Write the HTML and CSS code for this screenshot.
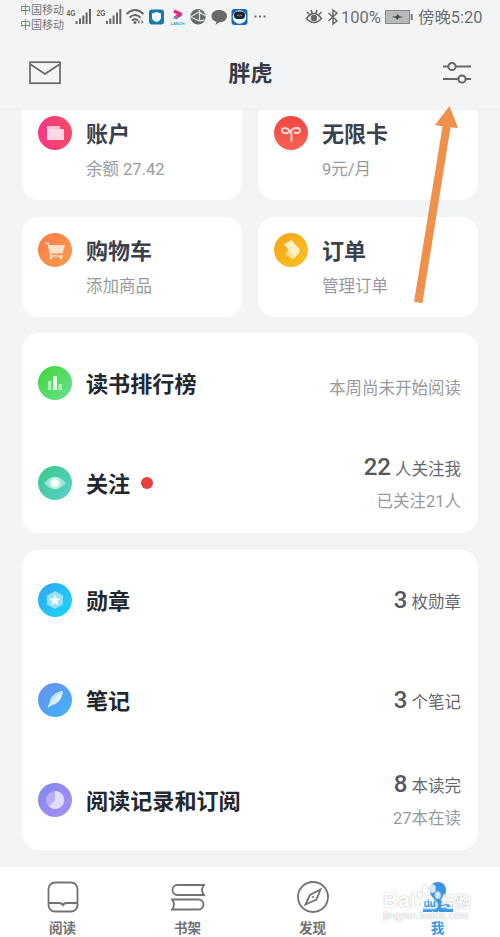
FILE: index.html
```
<!DOCTYPE html>
<html lang="zh-CN">
<head>
    <meta charset="UTF-8">
    <meta name="viewport" content="width=device-width, initial-scale=1.0">
    <title>我</title>
    <link rel="stylesheet" href="styles.css">
</head>
<body>
    <div class="app">
        <div class="status-bar">
            <div class="carriers">
                <span>中国移动</span>
                <span>中国移动</span>
            </div>
            <svg class="status-icons" width="206" height="34" viewBox="64 0 206 34">
                <text x="66.500" y="16" class="net" textLength="9" lengthAdjust="spacingAndGlyphs">4G</text>
                <path d="M76.5 21v3M80 18.500v5.500M83.300 15.500v8.500M86.600 12.500v11.500M90 9v15" stroke="#666769" stroke-width="2"/>
                <text x="96.500" y="16" class="net" textLength="9" lengthAdjust="spacingAndGlyphs">2G</text>
                <path d="M107 21v3M110.300 18.500v5.500M113.600 15.500v8.500M117 12.500v11.500M120.300 9v15" stroke="#666769" stroke-width="2"/>
                <g fill="none" stroke="#666769" stroke-width="1.800">
                    <path d="M126.500 14q8.500-8 17 0M129.500 17.500q5.500-5 11 0M132 20.500q3-2.500 6 0"/>
                </g>
                <circle cx="135" cy="22.500" r="1.500" fill="#666769"/>
                <path d="M137.500 22l2-2v4zM143.500 22l-2-2v4z" fill="#666769"/>
                <rect x="149" y="9.500" width="15" height="15" rx="3" fill="#1978a9"/>
                <path d="M156.500 12l4.500 1.500v4q0 3-4.500 4.500-4.500-1.500-4.500-4.500v-4z" fill="#eefaff"/>
                <path d="M155 15l3 2.500-3 2" fill="#d6f1f9"/>
                <path d="M174 11l6.500 3.200-5.500 3.800" fill="none" stroke="#df2c88" stroke-width="3.600" stroke-linejoin="round"/>
                <path d="M173.500 18.500l4-2" stroke="#49a5c8" stroke-width="1.600"/>
                <text x="170.500" y="24.500" class="app-name">LANCH</text>
                <circle cx="198" cy="16.800" r="7.700" fill="#68696b"/>
                <path d="M190.500 17l9-5.500M199.500 10v11M190.500 17l9 4M199.500 12l6 4M199.500 21l5-1" fill="none" stroke="#dfe0e2" stroke-width="1.300"/>
                <path d="M219 10c-4.500 0-7.500 2.600-7.500 6s2.500 5.200 5 5.800l-1 3 4-2.600c4.500 0 7.500-2.600 7.500-6.200s-3.500-6-8-6z" fill="#68696b"/>
                <rect x="231.500" y="9" width="16" height="16" rx="3" fill="#146ab7"/>
                <circle cx="239.500" cy="17" r="6.800" fill="#eef9ff"/>
                <rect x="234" y="11.500" width="11" height="7.500" rx="3.500" fill="#192332"/>
                <path d="M237 16q1.500-2 2.500 0 1-2 2.500 0" fill="none" stroke="#c69a51"/>
                <path d="M254.500 16.500h2M259 16.500h2M263.500 16.500h2" stroke="#696a6c" stroke-width="2"/>
            </svg>
            <svg class="system-icons" width="34" height="22" viewBox="305 6 34 22">
                <path d="M306.500 18.500q7.500-10 15 0-7.500 8-15 0zM307 12l2.500 2.500M311 10l1 3M317 10l-1 3M321.500 12l-2.500 2.500" fill="none" stroke="#68696b" stroke-width="1.600"/>
                <circle cx="314" cy="18" r="3.200" fill="#68696b"/>
                <path d="M328.500 13l8.500 8-4 3V10l4 3-8.500 8" fill="none" stroke="#68696b" stroke-width="1.500"/>
            </svg>
            <span class="battery-text">100%</span>
            <svg class="battery" width="28" height="16" viewBox="0 0 28 16">
                <rect x=".5" y="1.500" width="24" height="13" fill="#b9babc" stroke="#858688"/>
                <path d="M26.700 5v6" stroke="#77787a" stroke-width="2"/>
                <path d="M6.500 8l5-1 1-2 2 2.200 4 .8-5 1-1 2-2-2.200z" fill="#47484a"/>
            </svg>
            <span class="time">傍晚5:20</span>
        </div>

        <div class="header">
            <svg width="32" height="24" viewBox="0 0 32 24" fill="none" stroke="#66686c" stroke-width="1.700">
                <rect x="1" y="1.200" width="30" height="21"/>
                <path d="M1 3l15 10L31 3"/>
            </svg>
            <h1>胖虎</h1>
            <svg width="28" height="24" viewBox="0 0 28 24" fill="none" stroke="#66686c" stroke-width="2">
                <path d="M0 5.500h5M13 5.500h15M0 18h15M23 18h5"/>
                <circle cx="9" cy="5.500" r="3.600"/>
                <circle cx="19" cy="18" r="3.600"/>
            </svg>
        </div>

        <div class="content">
            <div class="cards">
                <div class="card">
                    <div class="icon pink">
                        <svg viewBox="0 0 34 34"><path d="M9 10h13v3h4v11H9z" fill="#ffc0d4"/><path d="M11 13h15v11H9V11" fill="#ffe0e9" opacity=".75"/></svg>
                    </div>
                    <div class="card-text"><h2>账户</h2><p>余额 27.42</p></div>
                </div>
                <div class="card">
                    <div class="icon red">
                        <svg viewBox="0 0 34 34" fill="none" stroke="#ffd9d4" stroke-width="2"><path d="M17.500 25.500V19q0-3-3-5.500c-3-2.500-6.500-1.500-6.500 1s4 4 7 1.500l4-3c3-2 7-1 7 1.500s-4 3.500-6 1.500"/></svg>
                    </div>
                    <div class="card-text"><h2>无限卡</h2><p>9元/月</p></div>
                </div>
                <div class="card">
                    <div class="icon orange">
                        <svg viewBox="0 0 34 34"><path d="M10 12h17l-2.500 8.500h-12z" fill="#ffe0cb"/><path d="M7 10h3l3 13h12" fill="none" stroke="#ffe0cb" stroke-width="1.400"/><circle cx="13" cy="25" r="1.300" fill="#fff0e4"/><circle cx="23" cy="25" r="1.300" fill="#fff0e4"/></svg>
                    </div>
                    <div class="card-text"><h2>购物车</h2><p>添加商品</p></div>
                </div>
                <div class="card">
                    <div class="icon yellow">
                        <svg viewBox="0 0 34 34"><path d="M10 11.500L17.500 7l8 9v4L19 26l-7-6 3-3z" fill="#fff1c5"/><path d="M14.500 18l5 4-1.500 4-6-4.500z" fill="#ffdf92"/></svg>
                    </div>
                    <div class="card-text"><h2>订单</h2><p>管理订单</p></div>
                </div>
            </div>

            <div class="group">
                <div class="row">
                    <div class="icon green">
                        <svg viewBox="0 0 34 34"><path d="M10 15h3.300v9H10zM20.500 18h3.500v6h-3.500z" fill="#adf1b6"/><path d="M15 10h4v14h-4z" fill="#e4ffe5"/></svg>
                    </div>
                    <h2>读书排行榜</h2>
                    <div class="info low"><p class="sub">本周尚未开始阅读</p></div>
                </div>
                <div class="row">
                    <div class="icon teal">
                        <svg viewBox="0 0 34 34"><path d="M6 17q11-13 22 0-11 13-22 0z" fill="#9ae5d4"/><circle cx="17" cy="17" r="5.700" fill="#c9f4e9"/><circle cx="17" cy="17" r="3.600" fill="#fff"/></svg>
                    </div>
                    <h2>关注</h2>
                    <span class="dot"></span>
                    <div class="info two-lines"><p><b>22</b> 人关注我</p><p class="sub">已关注21人</p></div>
                </div>
            </div>

            <div class="group">
                <div class="row">
                    <div class="icon cyan">
                        <svg viewBox="0 0 34 34"><path d="M17 8l8 4.600v9L17 26l-8-4.400v-9z" fill="#96e0fa"/><path d="M17 11.500l1.700 3.700 4 .5-3 2.700.8 4L17 20.400l-3.500 2 .8-4-3-2.700 4-.5z" fill="#effcff"/></svg>
                    </div>
                    <h2>勋章</h2>
                    <div class="info"><p><b>3</b> 枚勋章</p></div>
                </div>
                <div class="row">
                    <div class="icon blue">
                        <svg viewBox="0 0 34 34"><path d="M25 8c-7 1-12 5-13 11l-2.500 6L14 22c6-1 10-6 11-14z" fill="#d9f0ff"/><path d="M25 8c-6 4-10 8-13 14-1-8 4-12 13-14z" fill="#c3e4fc"/></svg>
                    </div>
                    <h2>笔记</h2>
                    <div class="info"><p><b>3</b> 个笔记</p></div>
                </div>
                <div class="row">
                    <div class="icon purple">
                        <svg viewBox="0 0 34 34"><circle cx="17" cy="17" r="9" fill="#b8adf7"/><path d="M17 8a9 9 0 11-6 15.500l6-6.500z" fill="#e2dcff"/></svg>
                    </div>
                    <h2>阅读记录和订阅</h2>
                    <div class="info two-lines"><p><b>8</b> 本读完</p><p class="sub">27本在读</p></div>
                </div>
            </div>
        </div>

        <div class="tab-bar">
            <div class="tab">
                <svg width="32" height="32" viewBox="0 0 32 32" fill="none" stroke="#707275" stroke-width="1.800"><rect x="1.500" y="1.500" width="29" height="29" rx="6.500"/><path d="M2 22h10q3 0 4 2 1-2 4-2h10"/></svg>
                <span>阅读</span>
            </div>
            <div class="tab">
                <svg width="34" height="32" viewBox="0 0 34 32" fill="none" stroke="#707275" stroke-width="1.800"><path d="M33 4H6.500a5 5 0 000 10H33q-4-5 0-10zM1 18.500h26.500a5 5 0 010 10H1q4-5 0-10z"/></svg>
                <span>书架</span>
            </div>
            <div class="tab">
                <svg width="32" height="32" viewBox="0 0 32 32" fill="none" stroke="#707275" stroke-width="1.800"><circle cx="16" cy="16" r="15"/><path d="M23.500 8.500l-4 10-11 5 4.500-9.500z"/><circle cx="16" cy="16" r="1" fill="#707275" stroke="none"/></svg>
                <span>发现</span>
            </div>
            <div class="tab active">
                <svg width="32" height="32" viewBox="0 0 32 32" fill="#3796e5"><path d="M16 1c-5 0-8 3.500-8 8 0 5 2 7 4 9v3c-4 2-9 2-11 5v1h30v-1c-2-3-7-3-11-5v-3c2-2 4-4 4-9 0-4.500-3-8-8-8zM1 27h30v4H1z"/></svg>
                <span>我</span>
            </div>
        </div>

        <svg class="arrow" width="40" height="204" viewBox="0 0 40 204">
            <path d="M36.500 0L45 22l-7.500-.8L9.500 197l-8.500-1L29.500 20.500 22 19z" fill="#ef914a" transform="translate(0 1)"/>
        </svg>

        <div class="watermark">
            <div class="brand">
                <span>Bai</span>
                <svg width="25" height="30" viewBox="0 0 27 30" fill="#fff" stroke="#d5d8dc"><ellipse cx="4" cy="13" rx="3" ry="4"/><ellipse cx="10" cy="6" rx="3.200" ry="4.500"/><ellipse cx="18" cy="6" rx="3.200" ry="4.500"/><ellipse cx="23.500" cy="13" rx="3" ry="4"/><path d="M14 13c-4 0-4 4-8 7-3 3-1 8 3 8h10c5 0 6-5 3-8-4-3-4-7-8-7z"/><text x="8" y="26" class="du">du</text></svg>
                <span>经验</span>
            </div>
            <div class="site">jingyan.baidu.com</div>
        </div>
    </div>
</body>
</html>
```
FILE: styles.css
```
* {
    box-sizing: border-box;
}
body {
    margin: 0;
    font-family: Roboto, "Noto Sans CJK SC", sans-serif;
    background-color: #f2f4f6;
    color: #66686c;
}
h1, h2, p {
    margin: 0;
}
.app {
    position: relative;
    width: 500px;
    height: 937px;
    overflow: hidden;
    display: flex;
    flex-direction: column;
}
.status-bar {
    height: 34px;
    flex-shrink: 0;
    display: flex;
    align-items: center;
    padding-left: 20px;
}
.carriers {
    width: 44px;
    display: flex;
    flex-direction: column;
    padding-top: 2px;
    font-size: 11px;
    line-height: 15px;
    color: #77787a;
    white-space: nowrap;
}
.status-icons {
    flex-shrink: 0;
}
.net {
    font: bold 8.5px "Liberation Sans", sans-serif;
    fill: #626365;
}
.app-name {
    font: bold 4px "Liberation Sans", sans-serif;
    fill: #329ebd;
}
.system-icons {
    margin-left: 35px;
}
.battery-text, .time {
    font-size: 16.5px;
    line-height: 34px;
    color: #6d6e70;
    white-space: nowrap;
}
.battery-text {
    width: 44px;
    margin-left: 2px;
    padding-top: 1px;
}
.time {
    margin-left: 5px;
    padding-top: 2px;
    font-size: 16.4px;
}
.battery {
    flex-shrink: 0;
}
.header {
    height: 76px;
    flex-shrink: 0;
    padding: 2px 29px 0;
    display: flex;
    align-items: center;
    justify-content: space-between;
    border-bottom: 1px solid #eef0f2;
}
.header h1 {
    font-size: 22px;
    line-height: 32px;
    padding-top: 2px;
    margin-right: 3px;
    color: #353a43;
}
.content {
    height: 757px;
    flex-shrink: 0;
    padding: 0 22px;
    overflow: hidden;
}
.cards {
    display: grid;
    grid-template-columns: 220px 220px;
    gap: 17px 16px;
    margin-top: -10px;
}
.card {
    height: 100px;
    padding: 16px 16px 0;
    display: flex;
    gap: 14px;
    background-color: white;
    border-radius: 17px;
}
.icon {
    width: 34px;
    height: 34px;
    flex-shrink: 0;
    border-radius: 50%;
}
.icon svg {
    display: block;
}
.pink { background: linear-gradient(90deg, #f53886, #f54a65); }
.red { background: linear-gradient(#f04640, #fa6054); }
.orange { background: linear-gradient(135deg, #f87c4a, #ff9b4b); }
.yellow { background: linear-gradient(135deg, #f5a41c, #f9c31d); }
.green { background: linear-gradient(135deg, #42d338, #68e292); }
.teal { background: linear-gradient(135deg, #36c987, #5dd1d0); }
.cyan { background: linear-gradient(135deg, #34a2f3, #16dcf5); }
.blue { background: linear-gradient(135deg, #6c8cef, #3db7f7); }
.purple { background: linear-gradient(135deg, #7d87eb, #aa92f6); }
.card-text {
    padding-top: 1px;
}
.card-text h2 {
    font-size: 22px;
    line-height: 36px;
    color: #3b414c;
}
.card-text p {
    font-size: 16.5px;
    line-height: 34px;
    color: #97999c;
}
.group {
    margin-top: 17px;
    background-color: white;
    border-radius: 17px;
}
.cards + .group {
    margin-top: 16px;
}
.row {
    height: 100px;
    padding: 0 17px 0 16px;
    display: flex;
    align-items: center;
}
.row h2 {
    margin-left: 14px;
    padding-top: 1px;
    font-size: 22.1px;
    line-height: 34px;
    color: #23272e;
}
.dot {
    width: 12px;
    height: 12px;
    margin-left: 11px;
    border-radius: 50%;
    background-color: #eb3d40;
}
.info {
    margin-left: auto;
    padding-top: 2px;
    text-align: right;
    font-size: 16.5px;
    line-height: 34px;
}
.info b {
    font-size: 24px;
    font-weight: 500;
    color: #55575b;
}
.info .sub {
    color: #97999c;
}
.info.low {
    padding-top: 11px;
}
.two-lines {
    padding-top: 3px;
}
.two-lines p {
    line-height: 32px;
}
.tab-bar {
    height: 70px;
    flex-shrink: 0;
    display: grid;
    grid-template-columns: repeat(4, 1fr);
    background-color: white;
}
.tab {
    display: flex;
    flex-direction: column;
    align-items: center;
    padding-top: 14px;
    font-size: 13.5px;
    font-weight: bold;
    color: #707275;
}
.tab span {
    line-height: 14px;
    margin-top: 8px;
}
.active {
    color: #3796e5;
}
.arrow {
    position: absolute;
    left: 413px;
    top: 105px;
    overflow: visible;
}
.watermark {
    position: absolute;
    left: 383px;
    top: 881px;
    opacity: 0.8;
    color: white;
    text-shadow: 0 0 1px #a9acb1, 0 0 2px #c6c8cc;
}
.brand {
    display: flex;
    align-items: center;
    height: 32px;
    font: bold 21px "Liberation Sans", "Noto Sans CJK SC", sans-serif;
}
.brand span {
    padding-top: 6px;
}
.brand span:last-child {
    font-size: 15px;
}
.du {
    font-size: 11px;
    fill: #3796e5;
    stroke: none;
    text-shadow: none;
}
.site {
    font: 10px/5px "Liberation Sans", sans-serif;
    letter-spacing: 0.3px;
}
```
